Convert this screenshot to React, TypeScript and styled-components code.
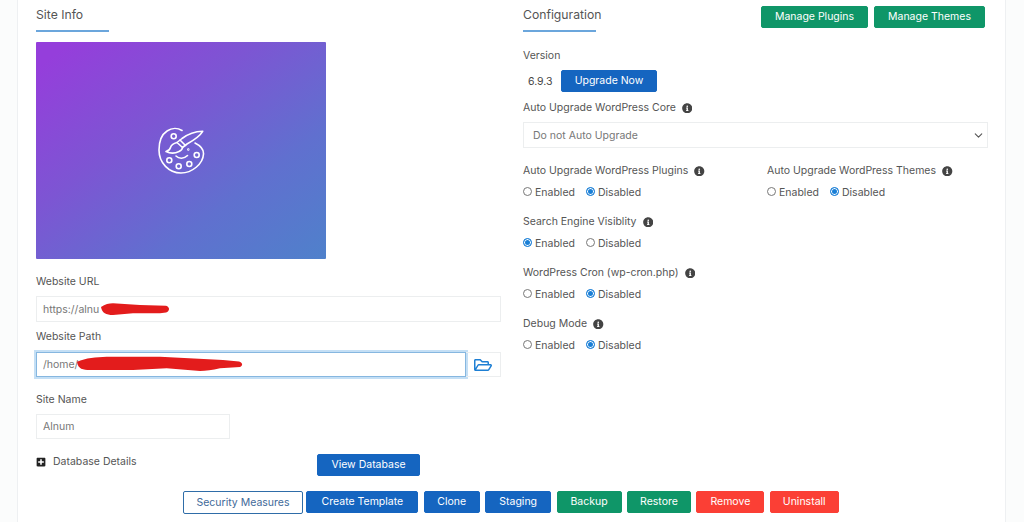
import React from 'react'
import styled, { createGlobalStyle } from 'styled-components'
import { FaInfoCircle, FaPlusSquare, FaRegFolderOpen } from 'react-icons/fa'
import { LuChevronDown } from 'react-icons/lu'

const GlobalStyle = createGlobalStyle`
  html, body {
    margin: 0;
    height: 522px;
    overflow: hidden;
    background: #fbfcfc;
    font-family: Inter, "Open Sans", sans-serif;
    font-size: 10.5px;
    color: #555;
  }
  * { box-sizing: border-box; }
`

const Card = styled.main`
  width: 989px;
  height: 522px;
  margin-left: 17px;
  padding: 0 18px;
  background: #fff;
  border-left: 1px solid #eef0f2;
  border-right: 1px solid #eef0f2;
`

const Columns = styled.div`
  display: grid;
  grid-template-columns: 465px 465px;
  column-gap: 22px;
`

const Column = styled.section`
  display: flex;
  flex-direction: column;
`

const HeadingRow = styled.div`
  display: flex;
  justify-content: space-between;
  padding-right: 3px;
`

const Heading = styled.h3`
  margin: 0;
  height: 32px;
  padding-top: 7px;
  font-size: 12.2px;
  line-height: 16px;
  font-weight: 400;
  color: #555;
  position: relative;

  &::after {
    content: '';
    position: absolute;
    left: 0;
    top: 30px;
    width: 73px;
    height: 1.5px;
    background: #6ba6dc;
  }
`

const HeadingActions = styled.div`
  display: flex;
  gap: 6px;
  padding-top: 6px;
`

const Thumbnail = styled.div`
  width: 290px;
  height: 217px;
  margin-top: 10px;
  padding-left: 1px;
  display: flex;
  align-items: center;
  justify-content: center;
  border-radius: 1px;
  background: linear-gradient(143deg, #953edb 6%, #7d55d3 38%, #6070cf 70%, #4f81cb 100%);
`

const Label = styled.label<{ $top: number }>`
  display: flex;
  align-items: center;
  gap: 6px;
  height: 16px;
  padding-top: 2px;
  margin-top: ${p => p.$top}px;
  line-height: 14px;
  color: #555;

  svg {
    color: #444;
    width: 10.5px;
    height: 10.5px;
  }
`

const Input = styled.input<{ $top: number; $width?: number; $height?: number; $focused?: boolean }>`
  display: block;
  width: ${p => (p.$width ? `${p.$width}px` : '100%')};
  height: ${p => p.$height ?? 25}px;
  margin-top: ${p => p.$top}px;
  padding: 0 6px;
  font: inherit;
  color: #777;
  background: #fff;
  outline: none;
  border: 1px solid ${p => (p.$focused ? '#86b7e0' : '#eceeef')};
  box-shadow: ${p => (p.$focused ? '0 0 0 2px #c4dff5' : 'none')};
`

const Overlaid = styled.div`
  position: relative;
`

const Scribble = styled.svg`
  position: absolute;
  left: 0;
  top: 0;
  pointer-events: none;
`

const PathGroup = styled.div`
  display: flex;
  margin-top: 8px;
`

const FolderAddon = styled.div`
  width: 35px;
  height: 25px;
  display: flex;
  align-items: center;
  justify-content: center;
  border: 1px solid #eceeef;
  border-left: none;
  color: #1d7fd4;

  svg {
    width: 18px;
    height: 18px;
  }
`

const DatabaseRow = styled.div`
  display: flex;
  align-items: flex-start;
  margin-top: 15px;
`

const DatabaseToggle = styled.div`
  width: 281px;
  display: flex;
  align-items: center;
  gap: 7px;
  padding-top: 1px;
  line-height: 14px;

  svg {
    width: 10px;
    height: 10px;
    color: #222;
  }
`

const tones = {
  blue: '#1565c0',
  green: '#0f9668',
  red: '#fb3f35',
}

const Button = styled.button<{ $tone: keyof typeof tones; $width: number }>`
  width: ${p => p.$width}px;
  height: 22px;
  padding: 0;
  flex: none;
  font: inherit;
  line-height: 20px;
  color: #fff;
  background: ${p => tones[p.$tone]};
  border: 1px solid ${p => tones[p.$tone]};
  border-radius: 2px;
`

const OutlineButton = styled.button`
  width: 120px;
  height: 23px;
  margin-right: -2px;
  padding: 0;
  font: inherit;
  color: #3f6a99;
  background: #fff;
  border: 1px solid #2f6da8;
  border-radius: 2px;
`

const VersionRow = styled.div`
  display: flex;
  align-items: center;
  margin-top: 7px;
`

const VersionNumber = styled.span`
  width: 38px;
  padding-left: 5px;
  color: #444;
`

const SelectBox = styled.div`
  display: flex;
  align-items: center;
  justify-content: space-between;
  height: 26px;
  margin-top: 7px;
  padding: 0 2px 0 9px;
  color: #777;
  border: 1px solid #eceeef;

  svg {
    width: 13px;
    height: 13px;
    color: #555;
  }
`

const OptionPair = styled.div`
  display: grid;
  grid-template-columns: 244px 1fr;
`

const OptionGroup = styled.div<{ $top?: number }>`
  margin-top: ${p => p.$top ?? 13}px;
`

const RadioRow = styled.div`
  display: flex;
  margin-top: 6px;
`

const RadioOption = styled.span`
  display: flex;
  align-items: center;
  gap: 3px;
  width: 63px;
  height: 16px;
`

const RadioDot = styled.span<{ $checked: boolean }>`
  width: 9px;
  height: 9px;
  margin-top: -2px;
  border-radius: 50%;
  border: 1px solid ${p => (p.$checked ? '#1a7fd6' : '#777')};
  background: ${p => (p.$checked ? '#1a7fd6' : '#fff')};
  box-shadow: ${p => (p.$checked ? 'inset 0 0 0 1px #fff' : 'none')};
`

const Footer = styled.div`
  display: flex;
  align-items: flex-start;
  gap: 5.4px;
  margin-top: 15px;
  padding-left: 147px;
`

const PaletteIcon = () => (
  <svg width="48" height="48" viewBox="0 0 48 48" fill="none" stroke="#fff" strokeWidth="1.6" strokeLinecap="round" strokeLinejoin="round">
    <path d="M24 3.500C20 1 14 .5 9 4 3 8 1 15 1 23c0 13 10 23 22 23 11 0 22-9 22.500-19 .3-5-4.500-9-8.500-11" />
    <path d="M44.700 4.300C38 4.500 30 7 24 11.500l-5 4 5.500 5 4.500-3.500C36 13 42 9 44.700 4.300z" />
    <path d="M19 15.500c-4 1-6 3-6.500 5-.5 2-2.500 3.500-4.500 4 4 2 9 2 13 0 2-1 3.500-2.500 3.500-4" />
    <path d="M22 13l5.500 5.500" />
    <circle cx="15.700" cy="9.200" r="2.500" />
    <circle cx="38.700" cy="28" r="2.500" />
    <circle cx="31.300" cy="37" r="2.500" />
    <circle cx="20.700" cy="39.300" r="2.500" />
    <circle cx="11.300" cy="33.300" r="2.500" />
    <path d="M18 29c3 3 8 3 11.500-.5" />
    <circle cx="30.300" cy="22.500" r=".4" />
  </svg>
)

const Info = () => <FaInfoCircle />

type RadioChoiceProps = { checked: 'Enabled' | 'Disabled' }

const RadioChoice = ({ checked }: RadioChoiceProps) => (
  <RadioRow>
    <RadioOption>
      <RadioDot $checked={checked === 'Enabled'} />
      Enabled
    </RadioOption>
    <RadioOption>
      <RadioDot $checked={checked === 'Disabled'} />
      Disabled
    </RadioOption>
  </RadioRow>
)

const App = () => (
  <Card>
    <GlobalStyle />
    <Columns>
      <Column>
        <Heading>Site Info</Heading>
        <Thumbnail>
          <PaletteIcon />
        </Thumbnail>

        <Label $top={14}>Website URL</Label>
        <Overlaid>
          <Input $top={7} $height={26} readOnly value="https://alnu" />
          <Scribble width="140" height="33">
            <path d="M65 18C69 15 73 14.500 77 14.300L104 16 130 16.700C134 18 134 22 130 23.500L124 24.300 97 24.300 77 26C70 26 66 24 65 18Z" fill="#e31c1c" />
          </Scribble>
        </Overlaid>

        <Label $top={6}>Website Path</Label>
        <Overlaid>
          <PathGroup>
            <Input $top={0} $width={430} $focused readOnly value="/home/" />
            <FolderAddon>
              <FaRegFolderOpen />
            </FolderAddon>
          </PathGroup>
          <Scribble width="240" height="33">
            <path d="M41 17.700C50 14 60 13 70.700 12.700L124 12.700 187 16 203 17.500C207 18.500 207 22 204 23L184 24.300C176 26 170 27 164 27L130.700 24.300 97 26 54 26C47 26 42 25 41 17.700Z" fill="#e31c1c" />
          </Scribble>
        </Overlaid>

        <Label $top={14}>Site Name</Label>
        <Input $top={7} $width={194} readOnly value="Alnum" />

        <DatabaseRow>
          <DatabaseToggle>
            <FaPlusSquare />
            Database Details
          </DatabaseToggle>
          <Button $tone="blue" $width={103}>View Database</Button>
        </DatabaseRow>
      </Column>

      <Column>
        <HeadingRow>
          <Heading>Configuration</Heading>
          <HeadingActions>
            <Button $tone="green" $width={107}>Manage Plugins</Button>
            <Button $tone="green" $width={111}>Manage Themes</Button>
          </HeadingActions>
        </HeadingRow>

        <Label $top={15}>Version</Label>
        <VersionRow>
          <VersionNumber>6.9.3</VersionNumber>
          <Button $tone="blue" $width={96}>Upgrade Now</Button>
        </VersionRow>

        <Label $top={7}>Auto Upgrade WordPress Core <Info /></Label>
        <SelectBox>
          Do not Auto Upgrade
          <LuChevronDown />
        </SelectBox>

        <OptionPair>
          <OptionGroup $top={14}>
            <Label $top={0}>Auto Upgrade WordPress Plugins <Info /></Label>
            <RadioChoice checked="Disabled" />
          </OptionGroup>
          <OptionGroup $top={14}>
            <Label $top={0}>Auto Upgrade WordPress Themes <Info /></Label>
            <RadioChoice checked="Disabled" />
          </OptionGroup>
        </OptionPair>

        <OptionGroup>
          <Label $top={0}>Search Engine Visiblity <Info /></Label>
          <RadioChoice checked="Enabled" />
        </OptionGroup>
        <OptionGroup>
          <Label $top={0}>WordPress Cron (wp-cron.php) <Info /></Label>
          <RadioChoice checked="Disabled" />
        </OptionGroup>
        <OptionGroup>
          <Label $top={0}>Debug Mode <Info /></Label>
          <RadioChoice checked="Disabled" />
        </OptionGroup>
      </Column>
    </Columns>

    <Footer>
      <OutlineButton>Security Measures</OutlineButton>
      <Button $tone="blue" $width={112}>Create Template</Button>
      <Button $tone="blue" $width={56}>Clone</Button>
      <Button $tone="blue" $width={66}>Staging</Button>
      <Button $tone="green" $width={65}>Backup</Button>
      <Button $tone="green" $width={64}>Restore</Button>
      <Button $tone="red" $width={68}>Remove</Button>
      <Button $tone="red" $width={69}>Uninstall</Button>
    </Footer>
  </Card>
)

export default App
